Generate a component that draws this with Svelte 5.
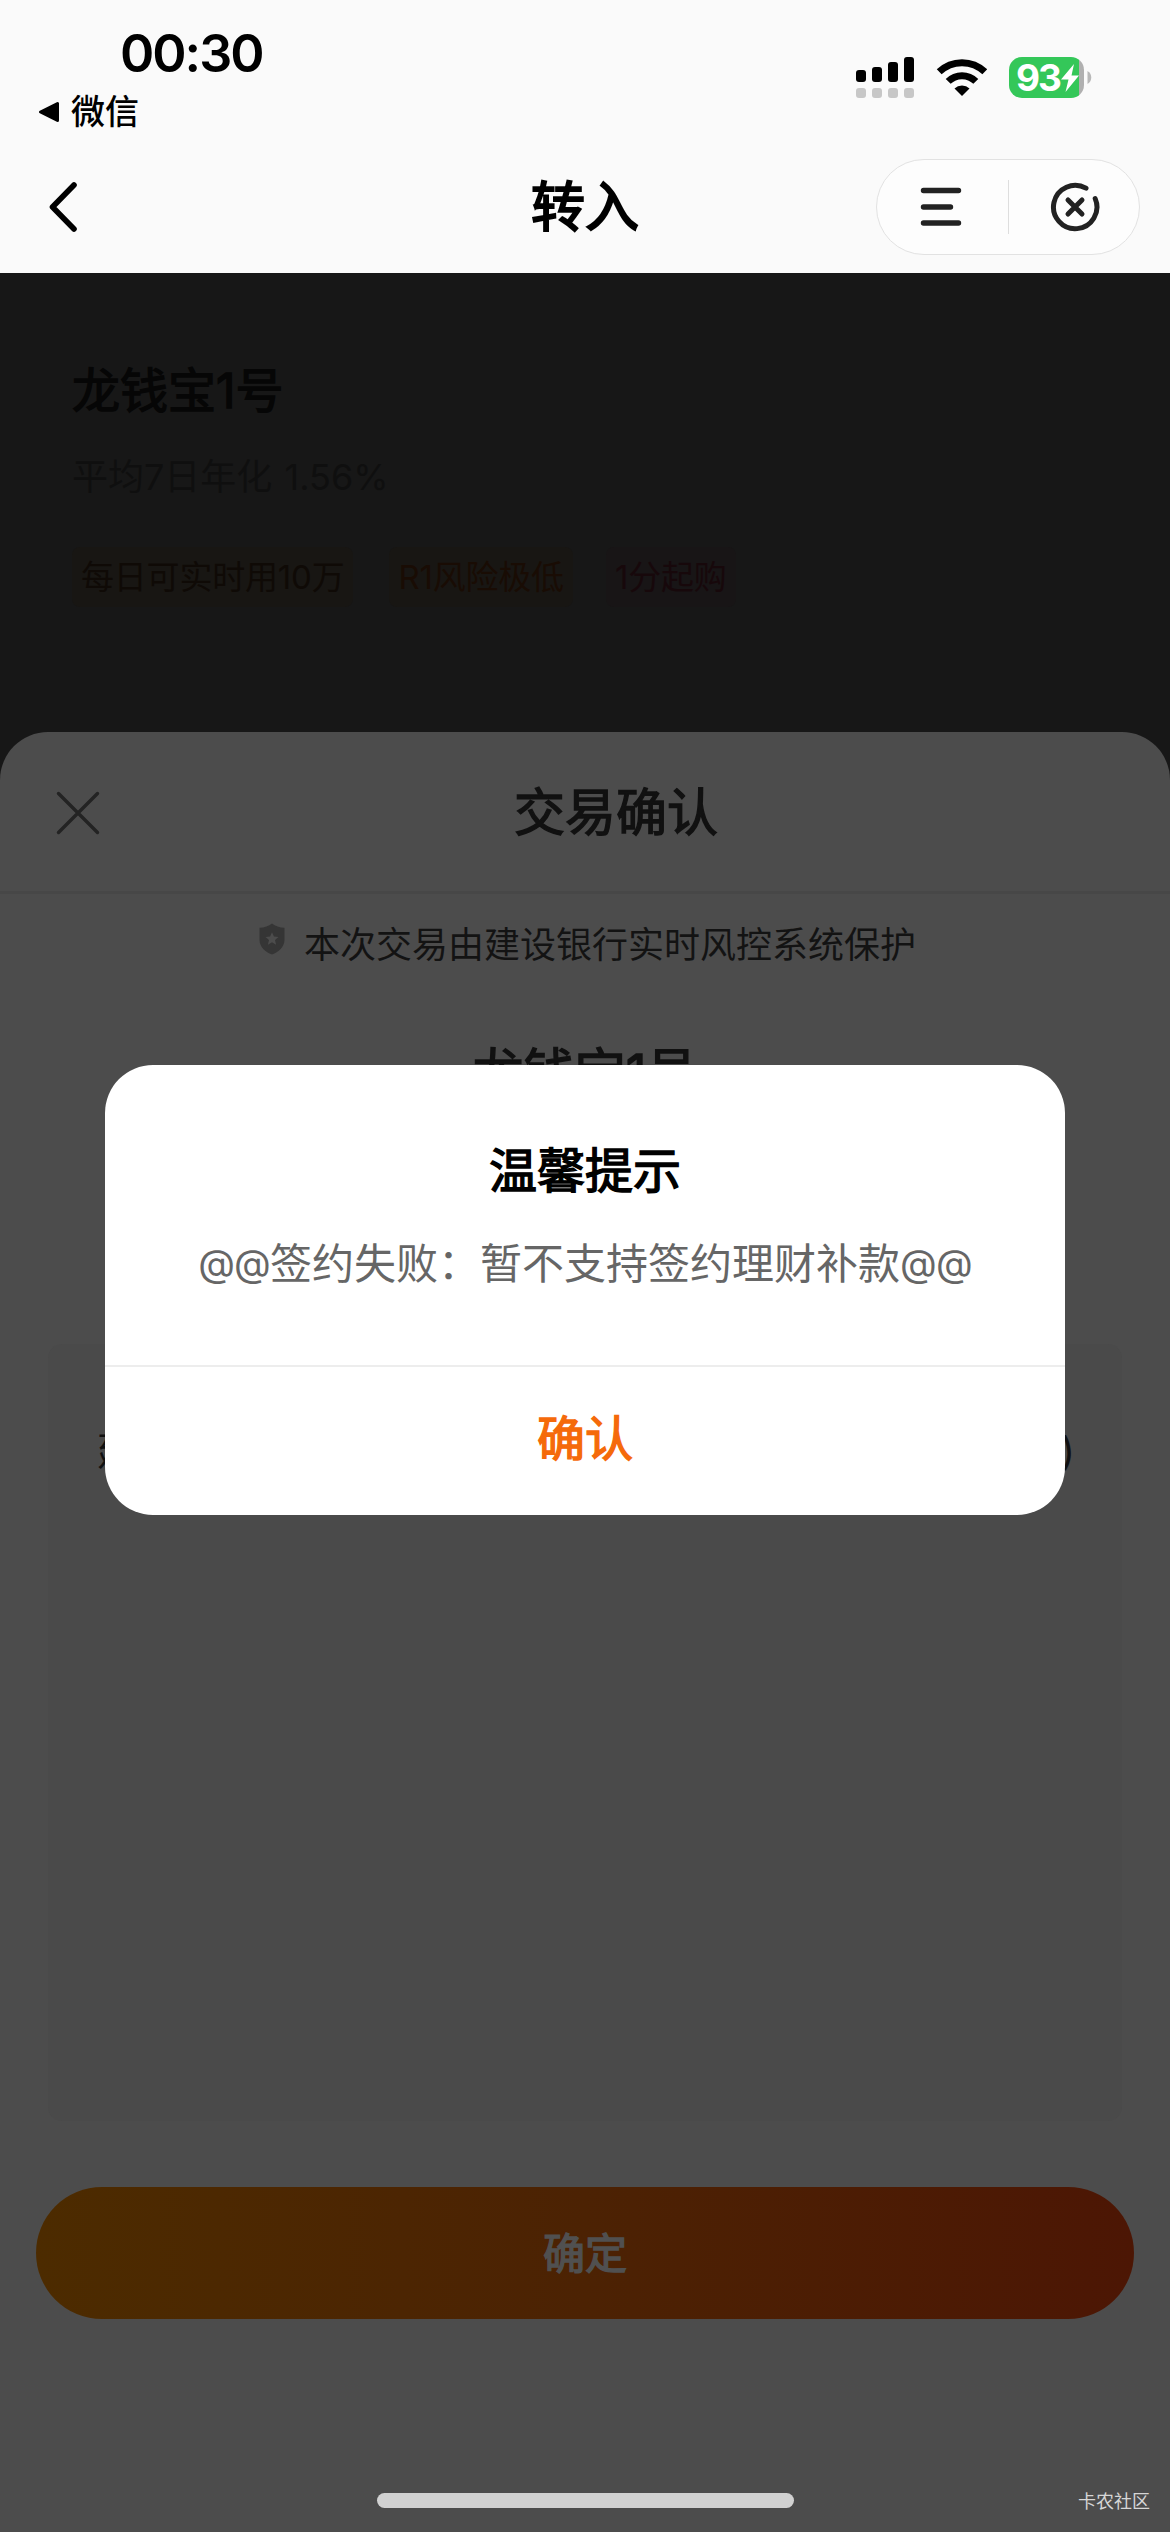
<script>
  const productName = '龙钱宝1号';
  const yieldText = '平均7日年化 1.56%';

  const tags = [
    { label: '每日可实时用10万', tone: 'amber' },
    { label: 'R1风险极低', tone: 'orange' },
    { label: '1分起购', tone: 'red' }
  ];

  // dual SIM signal: bar heights in px
  const signalBars = [12, 15, 20, 25];
</script>

<div class="screen">
  <header>
    <div class="status-bar">
      <div class="status-left">
        <span class="time">00:30</span>
        <span class="back-app">
          <svg width="22" height="22" viewBox="0 0 22 22" aria-hidden="true">
            <path d="M2.500 11 L19.500 2.500 V19.500 Z" fill="#000" stroke="#000" stroke-width="3" stroke-linejoin="round"/>
          </svg>
          微信
        </span>
      </div>
      <div class="status-right">
        <svg class="signal" width="58" height="41" viewBox="0 0 58 41" aria-hidden="true">
          {#each signalBars as h, i}
            <rect x={i * 16} y={25 - h} width="10" height={h} rx="3" fill="#000"/>
            <rect x={i * 16} y="31" width="10" height="10" rx="3" fill="#c7c7c7"/>
          {/each}
        </svg>
        <svg class="wifi" width="52" height="41" viewBox="0 0 52 41" aria-hidden="true">
          <g fill="none" stroke="#000" stroke-width="7">
            <path d="M3.200 14.800 A33 33 0 0 1 48.800 14.800"/>
            <path d="M12.200 24.400 A19.500 19.500 0 0 1 39.800 24.400"/>
          </g>
          <path d="M18.500 31.500 A11 11 0 0 1 33.500 31.500 L26 39 Z" fill="#000"/>
        </svg>
        <div class="battery">
          <div class="battery-body">
            <span>93</span>
            <svg width="20" height="28" viewBox="0 0 20 28" aria-hidden="true">
              <path d="M14 0 L1 15.500 H8.500 L5.500 28 L19 11.500 H11.500 Z" fill="#fff"/>
            </svg>
          </div>
          <svg width="5" height="13" viewBox="0 0 5 13" aria-hidden="true">
            <path d="M0.500 0 C5.500 2.500 5.500 10.500 0.500 13 Z" fill="#b8b8b8"/>
          </svg>
        </div>
      </div>
    </div>

    <nav>
      <svg class="back" width="34" height="56" viewBox="0 0 34 56" aria-hidden="true">
        <path d="M28 6 L6.500 28 L28 50" fill="none" stroke="#000" stroke-width="5.600" stroke-linecap="round" stroke-linejoin="round"/>
      </svg>
      <h1>转入</h1>
      <div class="capsule">
        <svg width="44" height="44" viewBox="0 0 44 44" aria-hidden="true">
          <path d="M4.500 5.500 H39.500 M4.500 22 H31.500 M4.500 38 H39.500" fill="none" stroke="#222" stroke-width="5.400" stroke-linecap="round"/>
        </svg>
        <i></i>
        <svg width="54" height="54" viewBox="0 0 54 54" aria-hidden="true">
          <g fill="none" stroke="#222" stroke-width="5" stroke-linecap="round">
            <path d="M38 8.200 A21.700 21.700 0 1 0 47.200 18.600"/>
            <path d="M20 20 L34 34 M34 20 L20 34"/>
          </g>
        </svg>
      </div>
    </nav>
  </header>

  <section class="product">
    <h2>{productName}</h2>
    <p>{yieldText}</p>
    <div class="tags">
      {#each tags as tag}
        <span class="tag {tag.tone}">{tag.label}</span>
      {/each}
    </div>
  </section>

  <section class="sheet">
    <div class="sheet-head">
      <svg width="46" height="46" viewBox="0 0 46 46" aria-hidden="true">
        <path d="M3.500 3.500 L42.500 42.500 M42.500 3.500 L3.500 42.500" fill="none" stroke="#232323" stroke-width="3.400" stroke-linecap="round"/>
      </svg>
      <h2>交易确认</h2>
    </div>

    <div class="guard">
      <svg width="26" height="32" viewBox="0 0 26 32" aria-hidden="true">
        <path d="M13 0.500 Q18 4.500 25.500 4.800 V17 C25.500 24 19.500 29 13 31.500 C6.500 29 0.500 24 0.500 17 V4.800 Q8 4.500 13 0.500 Z" fill="#353535"/>
        <path d="M13 9.200 L14.900 13.600 L19.500 14 L16 17.100 L17.100 21.700 L13 19.200 L8.900 21.700 L10 17.100 L6.500 14 L11.100 13.600 Z" fill="#4c4c4c"/>
      </svg>
      <span>本次交易由建设银行实时风控系统保护</span>
    </div>

    <h3>{productName}</h3>

    <div class="card">
      <span>建</span>
      <span>)</span>
    </div>

    <button class="submit">确定</button>
    <div class="home-indicator"></div>
  </section>

  <div class="dialog" role="dialog">
    <div class="dialog-body">
      <h2>温馨提示</h2>
      <p><span class="at">@@</span>签约失败：暂不支持签约理财补款<span class="at">@@</span></p>
    </div>
    <button>确认</button>
  </div>

  <span class="watermark">卡农社区</span>
</div>

<style>
  :global(body) {
    margin: 0;
  }

  .screen {
    position: relative;
    display: flex;
    flex-direction: column;
    width: 1170px;
    height: 2532px;
    overflow: hidden;
    background: #171717;
    font-family: Inter, 'Noto Sans CJK SC', sans-serif;
  }

  h1, h2, h3, p {
    margin: 0;
    white-space: nowrap;
  }

  /* semi-bold look between the regular and bold CJK cuts */
  h1, h2, h3, button {
    font-weight: 400;
    -webkit-text-stroke: 1.400px currentColor;
  }

  button {
    border: 0;
    padding: 0;
    font-family: inherit;
  }

  svg {
    display: block;
    flex-shrink: 0;
  }

  /* status bar + navigation */
  header {
    height: 273px;
    background: #fafafa;
    color: #000;
  }

  .status-bar {
    display: flex;
    justify-content: space-between;
    height: 141px;
    box-sizing: border-box;
    padding: 24px 78px 0 38px;
  }

  .status-left {
    display: flex;
    flex-direction: column;
    gap: 10px;
  }

  .time {
    padding-left: 82px;
    font-size: 52px;
    font-weight: 600;
    line-height: 60px;
    letter-spacing: -2px;
  }

  .back-app {
    display: flex;
    align-items: center;
    gap: 11px;
    font-size: 34px;
    font-weight: 500;
    line-height: 36px;
  }

  .status-right {
    display: flex;
    align-items: flex-start;
    padding-top: 33px;
  }

  .wifi {
    margin: 0 21px 0 22px;
  }

  .battery {
    display: flex;
    align-items: center;
    gap: 3px;
  }

  .battery-body {
    display: flex;
    align-items: center;
    width: 75px;
    height: 41px;
    box-sizing: border-box;
    padding-left: 7px;
    border-radius: 13px;
    background: linear-gradient(90deg, #34c759 70px, #b0b0b0 70px);
    color: #fff;
    font-size: 37px;
    font-weight: 700;
    line-height: 41px;
    letter-spacing: -2px;
  }

  nav {
    display: grid;
    grid-template-columns: 264px 1fr 264px;
    align-items: center;
    height: 132px;
    padding: 0 30px;
  }

  .back {
    margin-left: 16px;
  }

  h1 {
    padding-top: 2px;
    text-align: center;
    font-size: 54px;
    line-height: 60px;
    -webkit-text-stroke-width: 2px;
  }

  .capsule {
    display: flex;
    align-items: center;
    justify-content: space-between;
    height: 96px;
    box-sizing: border-box;
    padding: 0 37px 0 42px;
    border: 1.500px solid #e2e2e2;
    border-radius: 48px;
    background: #fdfdfd;
  }

  .capsule i {
    width: 1px;
    height: 54px;
    margin-left: 5px;
    background: #dedede;
  }

  /* dimmed page behind the sheet */
  .product {
    height: 459px;
    box-sizing: border-box;
    padding: 88px 72px 0;
  }

  .product h2 {
    color: #060606;
    font-size: 48px;
    line-height: 60px;
  }

  .product p {
    margin-top: 32px;
    color: #0f0f0f;
    font-size: 36px;
    line-height: 48px;
    word-spacing: 2px;
  }

  .tags {
    display: flex;
    gap: 36px;
    margin-top: 46px;
  }

  .tag {
    padding: 0 9px;
    border-radius: 8px;
    font-size: 33px;
    line-height: 60px;
    letter-spacing: -0.200px;
  }

  .amber {
    background: #181613;
    color: #0f0a06;
  }

  .orange {
    background: #181613;
    color: #190c04;
  }

  .red {
    margin-left: -3px;
    background: #181516;
    color: #17080b;
  }

  /* bottom sheet */
  .sheet {
    display: flex;
    flex: 1;
    flex-direction: column;
    border-radius: 48px 48px 0 0;
    background: #4c4c4c;
    color: #111;
  }

  .sheet-head {
    display: flex;
    align-items: center;
    height: 159px;
    padding: 0 55px;
    border-bottom: 3px solid #474747;
  }

  .sheet-head svg {
    margin-top: 3px;
  }

  .sheet-head h2 {
    flex: 1;
    padding: 3px 0 0 16px;
    text-align: center;
    font-size: 51px;
    line-height: 60px;
  }

  .guard {
    display: flex;
    justify-content: center;
    gap: 19px;
    margin-top: 27px;
    padding-left: 5px;
    color: #131313;
    font-size: 36px;
    line-height: 48px;
  }

  .guard svg {
    margin-top: 2px;
  }

  h3 {
    margin-top: 74px;
    text-align: center;
    font-size: 51px;
    line-height: 60px;
  }

  .card {
    display: flex;
    justify-content: space-between;
    height: 777px;
    box-sizing: border-box;
    margin: 241px 48px 0;
    padding: 77px 47px 0 49px;
    border-radius: 14px;
    background: #4a4a4a;
    font-size: 39px;
    line-height: 60px;
  }

  .submit {
    height: 132px;
    margin: 66px 36px 0;
    padding-bottom: 5px;
    border-radius: 66px;
    background: linear-gradient(90deg, #4c2b00, #4c2203 50%, #4c1604);
    color: #505050;
    font-size: 42px;
  }

  .home-indicator {
    width: 417px;
    height: 15px;
    margin: 174px auto 0;
    border-radius: 8px;
    background: #d1d1d1;
  }

  /* alert */
  .dialog {
    position: absolute;
    top: 1065px;
    left: 105px;
    display: flex;
    flex-direction: column;
    width: 960px;
    height: 450px;
    overflow: hidden;
    border-radius: 48px;
    background: #fff;
    text-align: center;
  }

  .dialog-body {
    height: 302px;
    box-sizing: border-box;
    padding-top: 76px;
    border-bottom: 2px solid #ededed;
  }

  .dialog h2 {
    color: #000;
    font-size: 48px;
    line-height: 60px;
  }

  .dialog p {
    margin-top: 32px;
    color: #666;
    font-size: 42px;
    line-height: 60px;
  }

  .at {
    font-size: 38px;
    letter-spacing: -0.800px;
    vertical-align: 2px;
  }

  .dialog button {
    flex: 1;
    padding-bottom: 12px;
    background: none;
    color: #f56a0a;
    font-size: 48px;
  }

  .watermark {
    position: absolute;
    right: 20px;
    bottom: 18px;
    color: #d6d6d6;
    font-size: 18px;
    line-height: 24px;
  }
</style>
